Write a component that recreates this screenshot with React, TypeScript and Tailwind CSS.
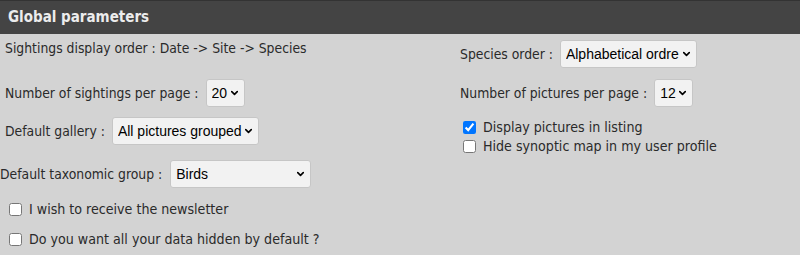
import { ChevronDown } from "lucide-react";

const label = "text-[13.8px] leading-[16px] text-[#2a2a2a]";

function Select({ value, width }: { value: string; width: string }) {
  return (
    <div className={`relative h-[28px] ${width}`}>
      <select
        defaultValue={value}
        className="h-full w-full appearance-none rounded-[3px] border border-[#c6c6c6] bg-[#f2f2f2] pl-[5px] pr-[16px] text-left font-['Liberation_Sans',Arial,sans-serif] text-[14px] text-black outline-none"
      >
        <option>{value}</option>
      </select>
      <ChevronDown
        size={11}
        strokeWidth={3.5}
        className="pointer-events-none absolute right-[5px] top-1/2 -translate-y-1/2 text-black"
      />
    </div>
  );
}

function Check({ text, checked }: { text: string; checked?: boolean }) {
  return (
    <label className="flex items-center gap-[7px] text-[14.1px] leading-[16px] text-[#2a2a2a]">
      <input type="checkbox" defaultChecked={checked} className="m-0 h-[13px] w-[13px] accent-[#0075ff]" />
      <span>{text}</span>
    </label>
  );
}

export default function App() {
  return (
    <div className="h-[255px] w-[800px] overflow-hidden bg-[#d3d3d3] font-['DejaVu_Sans_Condensed','DejaVu_Sans',sans-serif]">
      <div className="flex h-[34px] items-center border-t border-[#333] bg-[#444444] pl-[8px] text-[15px] font-bold text-[#ececec]">
        Global parameters
      </div>

      <div className="grid grid-cols-[455px_1fr] pl-[5px] pt-[6px]">
        <div className="flex flex-col">
          <div className={`h-[27px] ${label}`}>Sightings display order : Date -&gt; Site -&gt; Species</div>
          <div className="mt-[12px] flex items-center gap-[7px]">
            <span className={label}>Number of sightings per page :</span>
            <Select value="20" width="w-[39px]" />
          </div>
          <div className="mt-[10px] flex items-center gap-[7px]">
            <span className={label}>Default gallery :</span>
            <Select value="All pictures grouped" width="w-[147px]" />
          </div>
        </div>

        <div className="flex flex-col">
          <div className="flex items-center gap-[7px]">
            <span className={label}>Species order :</span>
            <Select value="Alphabetical ordre" width="w-[137px]" />
          </div>
          <div className="mt-[11px] flex items-center gap-[7px]">
            <span className={label}>Number of pictures per page :</span>
            <Select value="12" width="w-[39px]" />
          </div>
          <div className="mt-[12px] flex flex-col gap-[3px] pl-[3px]">
            <Check text="Display pictures in listing" checked />
            <Check text="Hide synoptic map in my user profile" />
          </div>
        </div>
      </div>

      <div className="mt-[6px] flex items-center gap-[8px]">
        <span className={label}>Default taxonomic group :</span>
        <Select value="Birds" width="w-[141px]" />
      </div>

      <div className="mt-[13px] flex flex-col gap-[14px] pl-[9px]">
        <Check text="I wish to receive the newsletter" />
        <Check text="Do you want all your data hidden by default ?" />
      </div>
    </div>
  );
}
